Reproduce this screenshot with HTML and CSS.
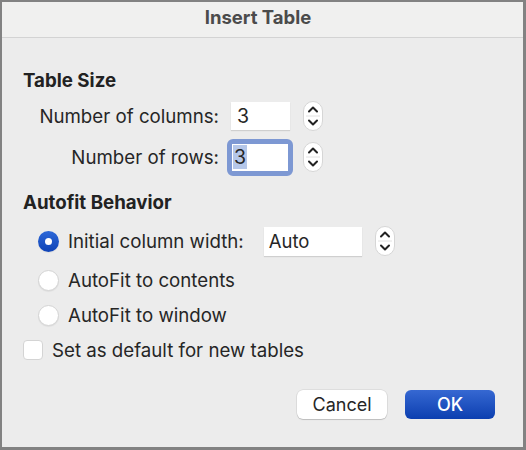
FILE: index.html
```html
<!DOCTYPE html>
<html>
<head>
<meta charset="utf-8">
<link rel="stylesheet" href="styles.css">
</head>
<body>
<div class="window">
  <div class="titlebar">Insert Table</div>
  <div class="content">
    <div class="heading h1">Table Size</div>
    <div class="grid">
      <div class="label r1">Number of columns:</div>
      <div class="field r1 fcol">3</div>
      <div class="stepper r1">
        <svg width="20" height="30" viewBox="0 0 20 30"><rect x="0.5" y="0.5" width="19" height="29" rx="9.5" fill="#fff" stroke="#d6d6d6"/><line x1="3" y1="15" x2="17" y2="15" stroke="#e2e2e2"/><path d="M6 10.5 L10 6.5 L14 10.5" fill="none" stroke="#222" stroke-width="2" stroke-linecap="round" stroke-linejoin="round"/><path d="M6 19.5 L10 23.5 L14 19.5" fill="none" stroke="#222" stroke-width="2" stroke-linecap="round" stroke-linejoin="round"/></svg>
      </div>
      <div class="label r2">Number of rows:</div>
      <div class="focusring r2"><div class="field fin"><span class="sel">3</span></div></div>
      <div class="stepper r2">
        <svg width="20" height="30" viewBox="0 0 20 30"><rect x="0.5" y="0.5" width="19" height="29" rx="9.5" fill="#fff" stroke="#d6d6d6"/><line x1="3" y1="15" x2="17" y2="15" stroke="#e2e2e2"/><path d="M6 10.5 L10 6.5 L14 10.5" fill="none" stroke="#222" stroke-width="2" stroke-linecap="round" stroke-linejoin="round"/><path d="M6 19.5 L10 23.5 L14 19.5" fill="none" stroke="#222" stroke-width="2" stroke-linecap="round" stroke-linejoin="round"/></svg>
      </div>
    </div>
    <div class="heading h2">Autofit Behavior</div>
    <div class="option o1">
      <span class="radio on"></span>
      <span class="otext">Initial column width:</span>
      <div class="field fauto">Auto</div>
      <div class="stepper">
        <svg width="20" height="30" viewBox="0 0 20 30"><rect x="0.5" y="0.5" width="19" height="29" rx="9.5" fill="#fff" stroke="#d6d6d6"/><line x1="3" y1="15" x2="17" y2="15" stroke="#e2e2e2"/><path d="M6 10.5 L10 6.5 L14 10.5" fill="none" stroke="#222" stroke-width="2" stroke-linecap="round" stroke-linejoin="round"/><path d="M6 19.5 L10 23.5 L14 19.5" fill="none" stroke="#222" stroke-width="2" stroke-linecap="round" stroke-linejoin="round"/></svg>
      </div>
    </div>
    <div class="option o2">
      <span class="radio"></span>
      <span class="otext">AutoFit to contents</span>
    </div>
    <div class="option o3">
      <span class="radio"></span>
      <span class="otext">AutoFit to window</span>
    </div>
    <div class="checkrow">
      <span class="checkbox"></span>
      <span class="ctext">Set as default for new tables</span>
    </div>
    <div class="buttons">
      <div class="btn cancel">Cancel</div>
      <div class="btn ok">OK</div>
    </div>
  </div>
</div>
</body>
</html>
```

FILE: styles.css
```css
html, body {
  margin: 0;
  padding: 0;
  background: #ececec;
}
body {
  font-family: "Inter", "Liberation Sans", sans-serif;
  color: #262626;
}
.window {
  width: 526px;
  height: 450px;
  box-sizing: border-box;
  border-style: solid;
  border-color: #828282;
  border-width: 2px 3px 3px 2px;
  background: #ececec;
  display: flex;
  flex-direction: column;
}
.titlebar {
  height: 36px;
  flex: none;
  background: #f0f0ef;
  border-bottom: 1px solid #d3d3d3;
  display: flex;
  align-items: center;
  justify-content: center;
  font-weight: 700;
  font-size: 18.5px;
  color: #4b4b4b;
  padding-bottom: 5px;
  padding-right: 9px;
  box-sizing: border-box;
}
.content {
  padding-left: 21px;
  display: flex;
  flex-direction: column;
}
.heading {
  font-weight: 700;
  font-size: 18.7px;
  height: 22px;
  line-height: 22px;
  color: #222;
}
.h1 { margin-top: 32px; }
.h2 { margin-top: 17px; }
.grid {
  display: grid;
  grid-template-columns: 196px 60px 20px;
  grid-template-rows: 30px 36px;
  column-gap: 11px;
  row-gap: 8px;
  margin-top: 9px;
  align-items: center;
}
.label {
  text-align: right;
  font-size: 18.7px;
  white-space: nowrap;
}
.field {
  background: #fff;
  box-sizing: border-box;
  font-size: 19.5px;
  display: flex;
  align-items: center;
  padding-left: 6px;
  box-shadow: 0 1px 1px rgba(0,0,0,0.12);
}
.fcol {
  height: 28px;
  width: 59px;
  margin-left: 1px;
}
.focusring {
  width: 66px;
  height: 37px;
  margin-left: -3px;
  box-sizing: border-box;
  border: 5px solid #7d98d3;
  border-radius: 6px;
  background: #fff;
}
.fin {
  height: 100%;
  padding-left: 1px;
  box-shadow: none;
}
.sel {
  background: #b5c7e9;
  padding: 0 1px;
  line-height: 24px;
}
.stepper {
  width: 20px;
  height: 30px;
  margin-left: 2px;
}
.stepper svg { display: block; }
.option {
  display: flex;
  align-items: center;
  height: 30px;
  padding-left: 15px;
  font-size: 18.7px;
}
.o1 { margin-top: 12px; }
.o2 { margin-top: 9px; }
.o3 { margin-top: 5px; }
.radio {
  width: 21px;
  height: 21px;
  border-radius: 50%;
  box-sizing: border-box;
  background: #fff;
  border: 1px solid #d4d4d4;
  box-shadow: 0 1px 1px rgba(0,0,0,0.06);
  flex: none;
  margin-right: 9px;
  position: relative;
}
.radio.on {
  border: none;
  background: linear-gradient(#2d68d8, #0f43b6);
}
.radio.on::after {
  content: "";
  position: absolute;
  left: 7px;
  top: 7px;
  width: 7px;
  height: 7px;
  border-radius: 50%;
  background: #fff;
}
.fauto {
  width: 98px;
  height: 29px;
  margin-left: 20px;
  padding-left: 5px;
  font-size: 18.5px;
}
.option .stepper { margin-left: 13px; }
.checkrow {
  display: flex;
  align-items: center;
  height: 24px;
  margin-top: 8px;
  font-size: 18.7px;
}
.checkbox {
  width: 20px;
  height: 20px;
  box-sizing: border-box;
  background: #fff;
  border: 1px solid #d4d4d4;
  border-radius: 4px;
  margin-right: 9px;
  flex: none;
}
.buttons {
  display: flex;
  justify-content: flex-end;
  gap: 18px;
  margin-top: 28px;
  padding-right: 28px;
}
.btn {
  width: 90px;
  height: 29px;
  border-radius: 6px;
  display: flex;
  align-items: center;
  justify-content: center;
  font-size: 18px;
  box-sizing: border-box;
}
.cancel {
  background: #fff;
  color: #262626;
  box-shadow: 0 0 0 0.5px rgba(0,0,0,0.12), 0 1px 1px rgba(0,0,0,0.15);
}
.ok {
  background: linear-gradient(#3668d2, #0c3fb0);
  color: #fff;
  font-weight: 500;
}
```
